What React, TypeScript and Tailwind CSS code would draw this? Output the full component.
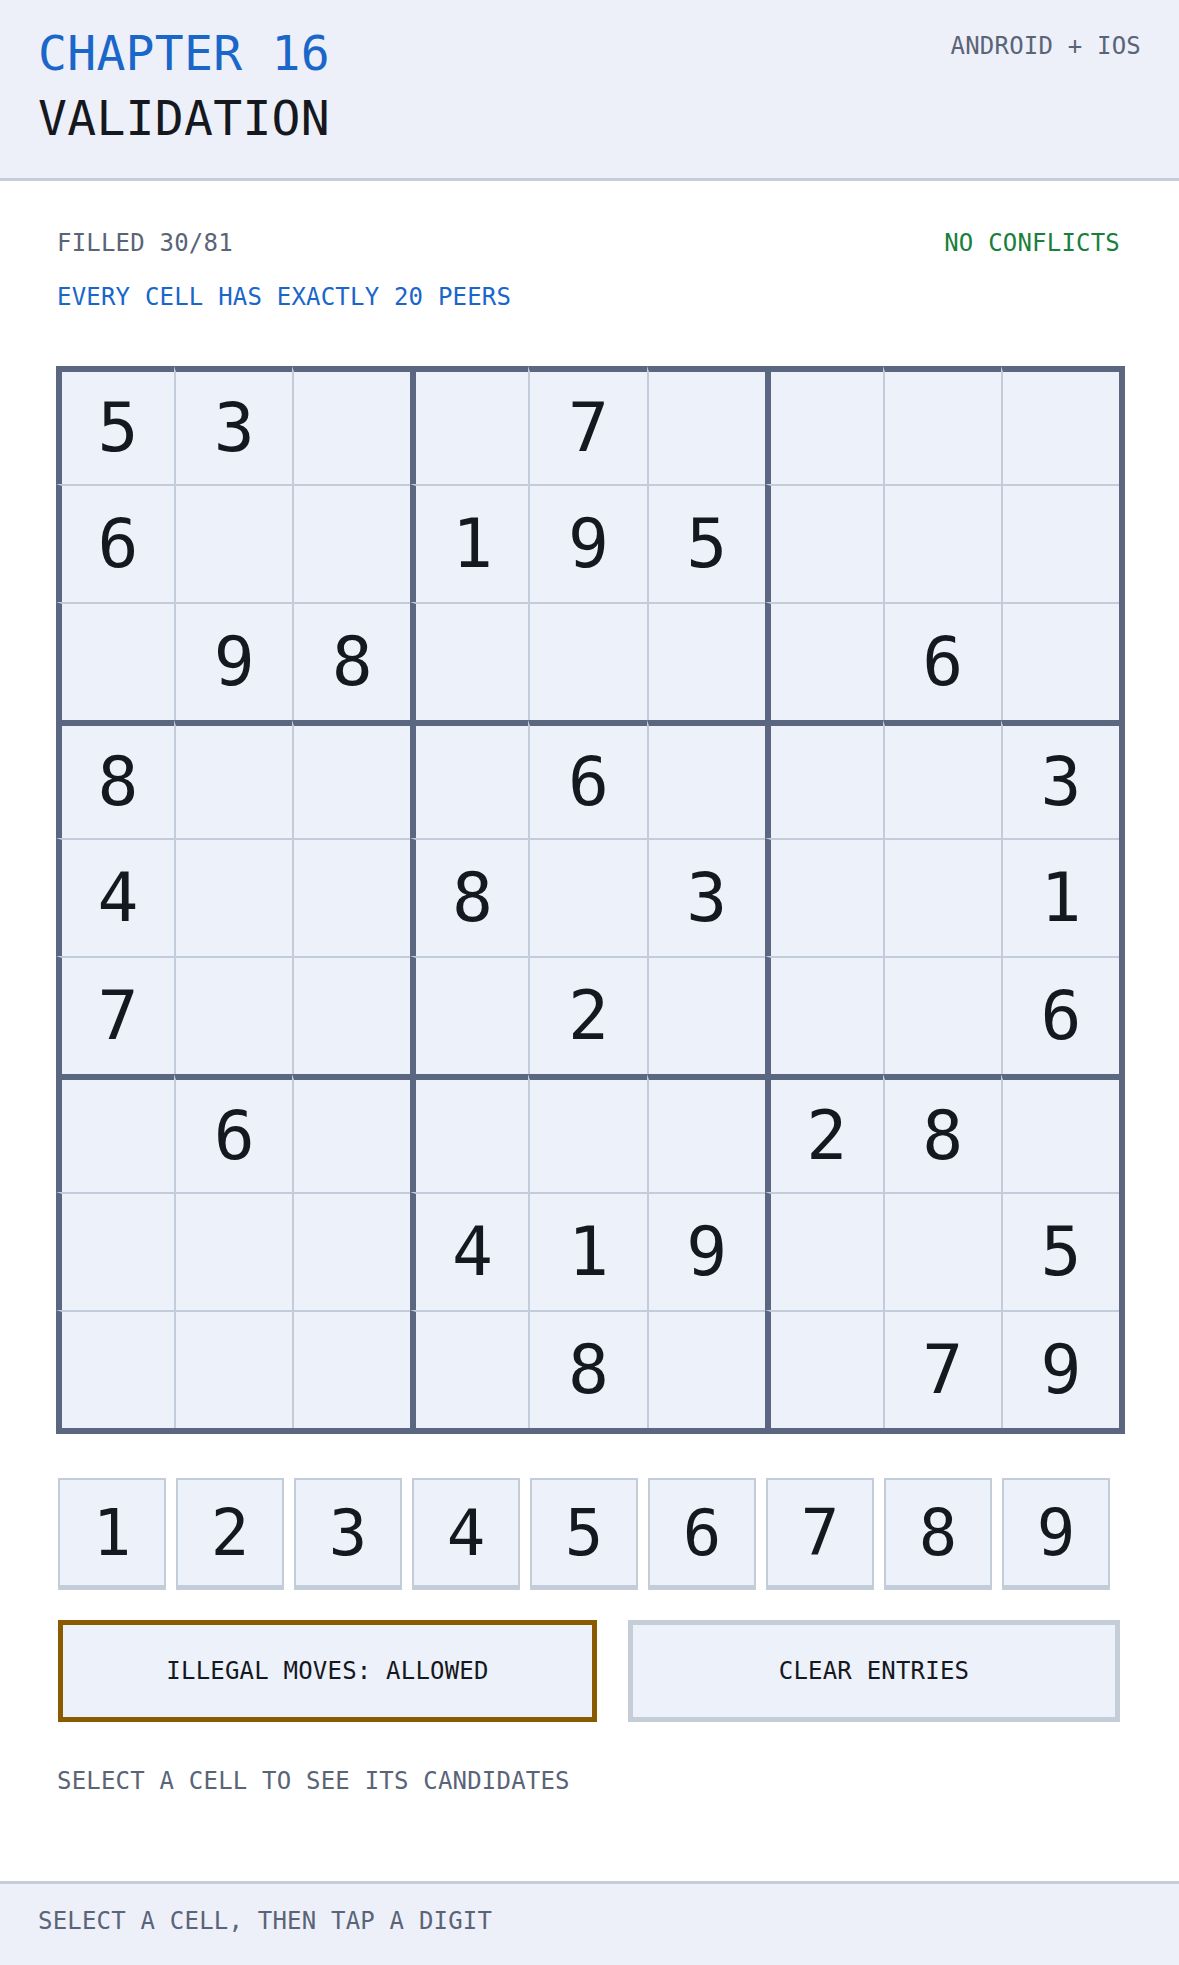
import { useState } from "react";

const PUZZLE = [
  "53..7....",
  "6..195...",
  ".98....6.",
  "8...6...3",
  "4..8.3..1",
  "7...2...6",
  ".6....28.",
  "...419..5",
  "....8..79",
];

function Cell({ r, c, v, selected, onPick }: { r: number; c: number; v: string; selected: boolean; onPick: () => void }) {
  const top = r % 3 === 0 ? "border-t-[6px] border-t-[#5b6780]" : "border-t-2 border-t-[#c3ccdb]";
  const left = c % 3 === 0 ? "border-l-[6px] border-l-[#5b6780]" : "border-l-2 border-l-[#c3ccdb]";
  return (
    <div
      onClick={onPick}
      className={`${top} ${left} h-[118px] flex items-center justify-center text-[68px] leading-none text-[#15181f] ${
        selected ? "bg-[#dbe6f7]" : "bg-[#edf1f9]"
      }`}
    >
      {v !== "." ? v : ""}
    </div>
  );
}

export default function App() {
  const [sel, setSel] = useState<number | null>(null);
  const filled = PUZZLE.join("").replace(/\./g, "").length;

  return (
    <div className="min-h-[1965px] flex flex-col bg-white font-['DejaVu_Sans_Mono','Liberation_Mono',monospace] text-[#15181f]">
      <header className="bg-[#edf0f8] border-b-[3px] border-[#c5cdd9] px-[38px] pt-[29px] pb-[36px] flex justify-between">
        <div className="flex flex-col gap-[17px]">
          <div className="text-[48px] leading-[48px] text-[#1a66c9] tracking-[0.3px]">CHAPTER 16</div>
          <div className="text-[48px] leading-[48px] tracking-[0.3px]">VALIDATION</div>
        </div>
        <div className="mt-[5px] text-[24px] leading-[24px] text-[#5a6478] tracking-[0.2px]">ANDROID + IOS</div>
      </header>

      <main className="flex-1 px-[57px] pt-[50px]">
        <div className="flex justify-between text-[24px] leading-[24px] tracking-[0.2px]">
          <span className="text-[#5a6478]">FILLED {filled}/81</span>
          <span className="text-[#1a7f3c] mr-[2px]">NO CONFLICTS</span>
        </div>
        <div className="mt-[30px] text-[24px] leading-[24px] tracking-[0.2px] text-[#1a66c9]">
          EVERY CELL HAS EXACTLY 20 PEERS
        </div>

        <div className="mt-[57px] -ml-px w-[1069px] grid grid-cols-9 border-r-[6px] border-b-[6px] border-[#5b6780]">
          {PUZZLE.map((row, r) =>
            row.split("").map((v, c) => (
              <Cell key={`${r}-${c}`} r={r} c={c} v={v} selected={sel === r * 9 + c} onPick={() => setSel(r * 9 + c)} />
            ))
          )}
        </div>

        <div className="mt-[44px] ml-px flex gap-[10px]">
          {[1, 2, 3, 4, 5, 6, 7, 8, 9].map((d) => (
            <button
              key={d}
              className="w-[108px] h-[112px] bg-[#edf1f9] border-2 border-b-[5px] border-[#c3ccd9] flex items-center justify-center text-[64px] leading-none text-[#15181f]"
            >
              {d}
            </button>
          ))}
        </div>

        <div className="mt-[30px] ml-px flex gap-[31px] mr-[2px]">
          <button className="w-[539px] h-[102px] bg-[#edf1f9] border-[5px] border-[#8a5a00] text-[24px] leading-[24px] tracking-[0.2px]">
            ILLEGAL MOVES: ALLOWED
          </button>
          <button className="flex-1 h-[102px] bg-[#edf1f9] border-[5px] border-[#c5cdd9] text-[24px] leading-[24px] tracking-[0.2px]">
            CLEAR ENTRIES
          </button>
        </div>

        <div className="mt-[47px] text-[24px] leading-[24px] tracking-[0.2px] text-[#5a6478]">
          SELECT A CELL TO SEE ITS CANDIDATES
        </div>
      </main>

      <footer className="bg-[#edf0f8] border-t-[3px] border-[#c5cdd9] px-[38px] pt-[25px] pb-[32px] text-[24px] leading-[24px] tracking-[0.2px] text-[#5a6478]">
        SELECT A CELL, THEN TAP A DIGIT
      </footer>
    </div>
  );
}
